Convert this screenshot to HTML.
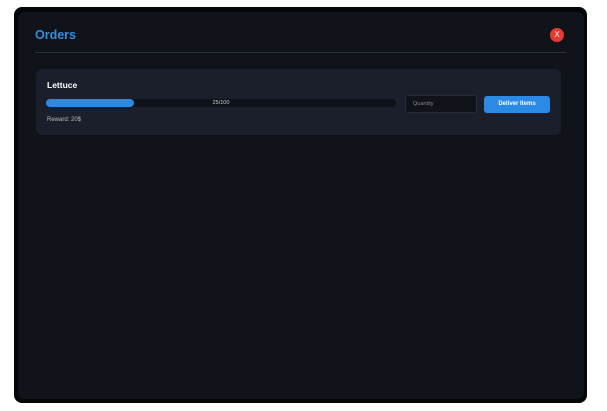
<!DOCTYPE html>
<html><head><style>
body{margin:0;width:607px;height:411px;background:#fff;position:relative;overflow:hidden;font-family:"Liberation Sans",sans-serif}
.outer{position:absolute;left:14px;top:7px;width:573px;height:396px;background:#050608;border-radius:8px}
.panel{position:absolute;left:18px;top:12px;width:566px;height:387px;background:#10131a;border-radius:6px}
.t{position:absolute;left:35px;top:28px;color:#2e8fe0;font-weight:bold;font-size:12.5px}
.x{position:absolute;left:550px;top:28px;width:14px;height:14px;border-radius:50%;background:#e8392f;color:#fff;font-size:8px;text-align:center;line-height:14px}
.hr{position:absolute;left:35px;top:52px;width:531px;height:1px;background:#2a2e38}
.card{position:absolute;left:36px;top:69px;width:525px;height:66px;background:#1b1f2b;border-radius:6px}
.name{position:absolute;left:47px;top:80px;color:#fff;font-weight:bold;font-size:8.5px}
.bar{position:absolute;left:46px;top:99px;width:350px;height:8px;background:#0f1218;border-radius:4px}
.fill{position:absolute;left:0;top:0;width:88px;height:8px;background:#2a8ae6;border-radius:4px}
.bt{position:absolute;left:0;width:350px;top:0;line-height:8px;text-align:center;color:#ccc;font-size:5.5px}
.rw{position:absolute;left:47px;top:117px;color:#bbb;font-size:6px}
.in{position:absolute;left:405px;top:95px;width:72px;height:18px;background:#10131a;border:1px solid #262a34;box-sizing:border-box;border-radius:3px;color:#888;font-size:5.5px;line-height:16px;padding-left:7px}
.btn{position:absolute;left:484px;top:96px;width:66px;height:17px;background:#2a8ae6;border-radius:3px;color:#fff;font-weight:bold;font-size:6px;text-align:center;line-height:17px}
</style></head><body>
<div class="outer"></div><div class="panel"></div>
<div class="t">Orders</div><div class="x">X</div><div class="hr"></div>
<div class="card"></div>
<div class="name">Lettuce</div>
<div class="bar"><div class="fill"></div><div class="bt">25/100</div></div>
<div class="rw">Reward: 20$</div>
<div class="in">Quantity</div>
<div class="btn">Deliver Items</div>
</body></html>
